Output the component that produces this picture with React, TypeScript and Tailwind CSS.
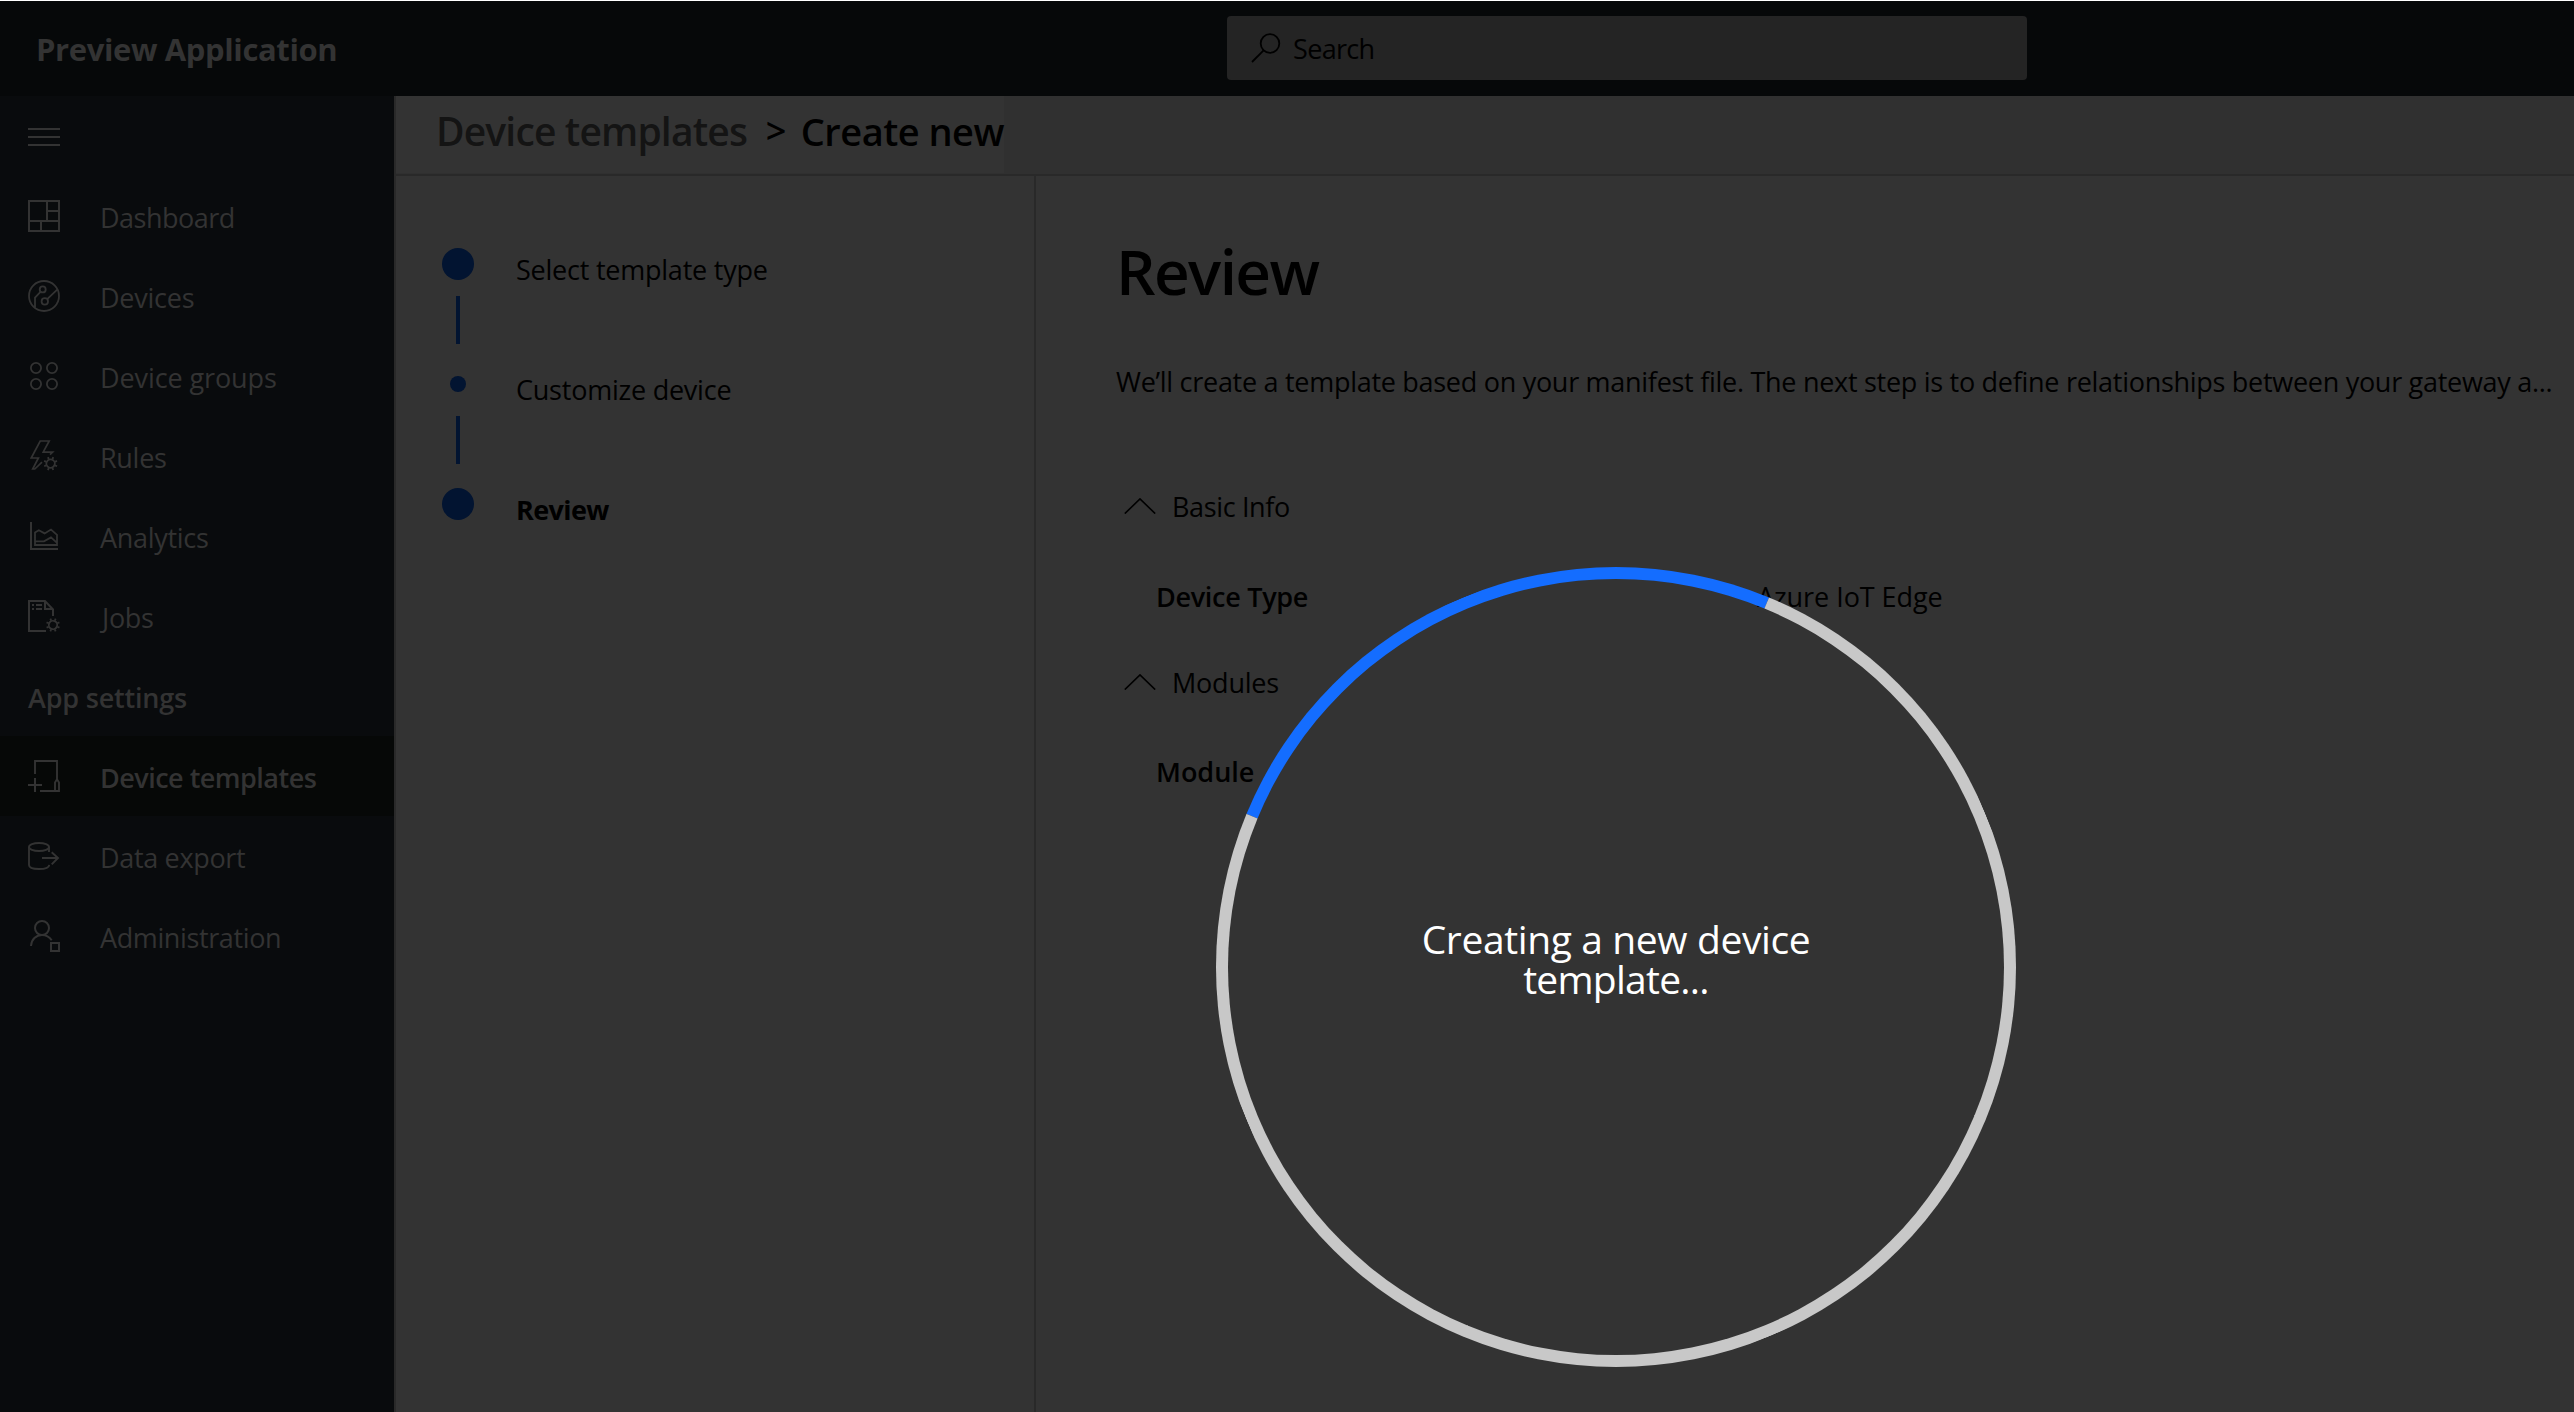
import type { ReactNode } from 'react';

function Icon({ children }: { children: ReactNode }) {
  return (
    <svg viewBox="0 0 32 32" className="mb-[5px] size-8 shrink-0 overflow-visible" fill="none" stroke="currentColor" strokeWidth="2">
      {children}
    </svg>
  );
}

function Gear({ x, y }: { x: number; y: number }) {
  return (
    <g transform={`translate(${x} ${y}) rotate(22.5)`}>
      <circle r="4.2" strokeWidth="1.8" />
      <path
        strokeWidth="1.8"
        d="M0-4.6V-7M0 4.6V7M-4.6 0H-7M4.6 0H7M3.3-3.3 4.9-4.9M-3.3-3.3-4.9-4.9M3.3 3.3 4.9 4.9M-3.3 3.3-4.9 4.9"
      />
    </g>
  );
}

const mainItems = [
  {
    label: 'Dashboard',
    text: 'tracking-[-0.515px]',
    icon: <path shapeRendering="crispEdges" d="M1 1H31V31H1ZM1 21H31M19 1V21M19 11H31M13 21V31" />,
  },
  {
    label: 'Devices',
    text: 'tracking-[-0.241px]',
    icon: (
      <g strokeWidth="1.8">
        <circle cx="16" cy="16" r="15" />
        <circle cx="14.7" cy="9.4" r="3" />
        <circle cx="16.8" cy="21.4" r="3.2" />
        <path d="M12.5 11.8 7 17.6V27.5M19.2 19.2 29.2 9.6" />
      </g>
    ),
  },
  {
    label: 'Device groups',
    text: 'tracking-[-0.098px]',
    icon: (
      <g strokeWidth="1.8">
        <circle cx="8" cy="8" r="5.1" />
        <circle cx="24" cy="8" r="5.1" />
        <circle cx="8" cy="24" r="5.1" />
        <circle cx="24" cy="24" r="5.1" />
      </g>
    ),
  },
  {
    label: 'Rules',
    text: 'tracking-[-0.3px]',
    icon: (
      <>
        <path strokeWidth="1.7" d="M22 14.7 24.6 12.2H15.2L21.2 1H12.2L3.2 18H10.4L4.7 29H6.8L14 22.2" />
        <Gear x={22.6} y={23.6} />
      </>
    ),
  },
  {
    label: 'Analytics',
    text: 'tracking-[-0.294px]',
    icon: (
      <>
        <path d="M3 2V29H30" />
        <path strokeWidth="1.8" d="M7 25V12.5L10.8 10.2 16.6 13.4 23 9.6 29 14.8V25ZM7 21.4H16L23 17.4 29 22.8" />
      </>
    ),
  },
  {
    label: 'Jobs',
    text: 'ml-[2px] tracking-[-0.337px]',
    icon: (
      <>
        <path d="M18 31H1V1H17L25 9.5V16M17 1V9H25" />
        <path d="M4 5H6M8 5H14M4 9H6M8 9H14" />
        <Gear x={25} y={25} />
      </>
    ),
  },
];

const settingsItems = [
  {
    label: 'Device templates',
    row: 'bg-[#060807]',
    text: 'font-semibold tracking-[-0.52px]',
    icon: (
      <>
        <path d="M7 14V1H29V19M12 31H31V22.5L29 19.3 27 22.5V31" strokeWidth="1.9" />
        <path d="M0 25H14M7 18V32" />
      </>
    ),
  },
  {
    label: 'Data export',
    row: '',
    text: 'tracking-[-0.332px]',
    icon: (
      <g strokeWidth="1.9">
        <ellipse cx="11" cy="7" rx="10" ry="4" />
        <path d="M1 7V25C1 27.6 5.5 29 11 29 16.500 29 21 27.600 21.300 24.800M21 7V12M14 18H30.500M23.700 12.200 30 18 23.700 24.400" />
      </g>
    ),
  },
  {
    label: 'Administration',
    row: '',
    text: 'tracking-[-0.384px]',
    icon: (
      <>
        <circle cx="14" cy="8" r="7" />
        <path d="M3 26C3.400 19.500 8 15 14 15 18 15 21.500 17 23.700 20.200" />
        <path d="M23 23H31V31H23Z" />
      </>
    ),
  },
];

function NavItem({ label, row = '', text, icon }: { label: string; row?: string; text: string; icon: ReactNode }) {
  return (
    <li className={`flex h-20 items-center gap-10 pt-[5px] pl-7 ${row}`}>
      <Icon>{icon}</Icon>
      <span className={text}>{label}</span>
    </li>
  );
}

function Section({ title, text }: { title: string; text: string }) {
  return (
    <div className="flex h-10 items-center gap-4 pl-2">
      <svg viewBox="0 0 32 16" className="mb-[3px] h-4 w-8" fill="none" stroke="currentColor" strokeWidth="1.6">
        <path d="M.8 15.6 16 .9 31.200 15.600" />
      </svg>
      <span className={text}>{title}</span>
    </div>
  );
}

const steps = [
  { label: 'Select template type', text: 'tracking-[-0.23px]', dot: 'size-8', line: true },
  { label: 'Customize device', text: 'tracking-[-0.23px]', dot: 'size-4', line: true },
  { label: 'Review', text: 'font-bold tracking-[-0.6px]', dot: 'size-8', line: false },
];

export default function App() {
  return (
    <div className="relative flex h-[1412px] w-[2574px] flex-col overflow-hidden border-t border-white bg-[#333333] font-['Open_Sans',sans-serif] text-[27px] whitespace-nowrap text-black">
      <header className="flex h-[95px] shrink-0 items-start bg-[#060809] pt-[15px]">
        <h1 className="w-[1227px] pl-9 text-[31px] leading-[67px] font-bold tracking-[-0.382px] text-[#333333]">Preview Application</h1>
        <div className="flex h-16 w-[800px] items-center rounded bg-[#242424] pt-[3px] pl-6">
          <svg viewBox="0 0 30 30" className="mb-[4px] size-[30px]" fill="none" stroke="currentColor" strokeWidth="1.8">
            <circle cx="19" cy="10.500" r="9.300" />
            <path d="M12.600 17.300 1 29" />
          </svg>
          <span className="ml-[12px] tracking-[-0.667px]">Search</span>
        </div>
      </header>

      <div className="flex min-h-0 flex-1">
        <nav className="w-[394px] shrink-0 bg-[#090b0d] text-[#333333]">
          <div className="flex h-20 flex-col gap-1.5 pt-8 pl-7">
            <span className="h-0.5 w-8 bg-[#333333]" />
            <span className="h-0.5 w-8 bg-[#333333]" />
            <span className="h-0.5 w-8 bg-[#333333]" />
          </div>
          <ul>
            {mainItems.map((item) => (
              <NavItem key={item.label} {...item} />
            ))}
          </ul>
          <h2 className="flex h-20 items-center pt-[5px] pl-7 font-semibold tracking-[-0.2px]">App settings</h2>
          <ul>
            {settingsItems.map((item) => (
              <NavItem key={item.label} {...item} />
            ))}
          </ul>
        </nav>

        <main className="flex min-w-0 flex-1 flex-col border-l-2 border-[#292929]">
          <div className="flex h-20 shrink-0 border-b-2 border-[#292929] bg-[#303030] text-[39px] font-semibold">
            <div className="flex h-[77px] w-[608px] items-center bg-[#333333] pb-[7px] pl-10">
              <span className="w-[330px] tracking-[-0.84px] text-[#141414]">Device templates</span>
              <span className="w-[35px] text-[36px]">&gt;</span>
              <span className="text-[38px] tracking-[-0.5px]">Create new</span>
            </div>
          </div>

          <div className="flex min-h-0 flex-1">
            <ol className="w-[640px] shrink-0 border-r-2 border-[#292929] pt-[72px] pl-[46px]">
              {steps.map((step) => (
                <li key={step.label} className="flex h-[120px] gap-[42px]">
                  <div className="flex w-8 flex-col items-center gap-4">
                    <div className="flex h-8 items-center">
                      <span className={`rounded-full bg-[#021431] ${step.dot}`} />
                    </div>
                    {step.line && <span className="h-12 w-1 bg-[#021431]" />}
                  </div>
                  <span className={`leading-[43px] ${step.text}`}>{step.label}</span>
                </li>
              ))}
            </ol>

            <section className="min-w-0 flex-1 pt-[55px] pl-20 leading-10">
              <h2 className="text-[62px] leading-20 font-semibold tracking-[-1.6px]">Review</h2>
              <p className="mt-[51px] tracking-[-0.285px]">
                We’ll create a template based on your manifest file. The next step is to define relationships between your gateway a...
              </p>
              <div className="mt-[85px]">
                <Section title="Basic Info" text="tracking-[-0.362px]" />
                <div className="mt-[50px] flex pl-10">
                  <span className="w-[601px] font-semibold tracking-[-0.299px]">Device Type</span>
                  <span className="tracking-[-0.057px]">Azure IoT Edge</span>
                </div>
              </div>
              <div className="mt-[46px]">
                <Section title="Modules" text="tracking-[-0.214px]" />
                <div className="mt-[49px] pl-10 font-semibold">Module</div>
              </div>
            </section>
          </div>
        </main>
      </div>

      <div className="absolute top-[566px] left-[1216px] size-[800px]">
        <div className="absolute inset-0 rotate-[-22.5deg] rounded-full border-[12px] border-[#c8c8c8] border-t-[#146dff]" />
        <p className="relative pt-[352px] text-center text-[39px] leading-10 text-white">
          <span className="tracking-[-0.38px]">Creating a new device</span>
          <br />
          <span className="tracking-[-0.74px]">template...</span>
        </p>
      </div>
    </div>
  );
}
